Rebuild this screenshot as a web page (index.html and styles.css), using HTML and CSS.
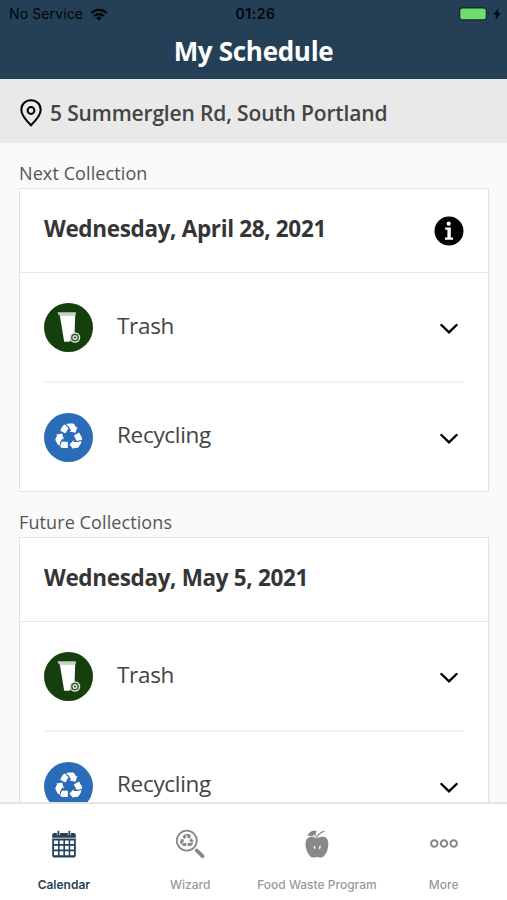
FILE: index.html
```html
<!DOCTYPE html>
<html lang="en">
<head>
<meta charset="utf-8">
<title>My Schedule</title>
<link rel="stylesheet" href="styles.css">
</head>
<body>
<svg class="defs" width="0" height="0" aria-hidden="true">
  <defs>
    <g id="arrow">
      <path d="M-1.2 5V11.3H-6.5Q-8.6 11.3-9.2 10.2L-7.6 5Z"/>
      <path d="M.5 8 4.8 3.2V5.2H9.8L12.4 3.8Q13.2 5.2 12.2 7L10 10.4Q9.4 11.3 8 11.3H4.8V13Z"/>
    </g>
    <symbol id="recycle" viewBox="-14.5 -14.5 29 29">
      <use href="#arrow"/>
      <use href="#arrow" transform="rotate(120)"/>
      <use href="#arrow" transform="rotate(240)"/>
    </symbol>
    <symbol id="bin" viewBox="0 0 49 49">
      <circle cx="24.5" cy="24.5" r="24.5" fill="#153f0d"/>
      <path d="M13.5 9.3H31.8V12.2H14.8Z" fill="#c4d2c0"/>
      <path d="M15.8 12.2H31.2L30.5 31 25.6 38.8H20.2Z" fill="#fff"/>
      <circle cx="31" cy="34.5" r="5.3" fill="#d5dfd2"/>
      <circle cx="31" cy="34.5" r="3.2" fill="none" stroke="#2d5228" stroke-width="1.3"/>
      <circle cx="31" cy="34.5" r="1" fill="#2d5228"/>
    </symbol>
    <symbol id="chevron" viewBox="0 0 18 12">
      <path d="M1.4 2 9 9.4 16.6 2" fill="none" stroke="#000" stroke-width="2.4" stroke-linecap="round" stroke-linejoin="miter"/>
    </symbol>
  </defs>
</svg>

<div class="screen">
  <header class="header">
    <div class="status">
      <div class="status-left">
        <span class="carrier">No Service</span>
        <svg class="wifi" width="18" height="13" viewBox="0 0 18 13">
          <path d="M1.4 5A11 11 0 0 1 16.6 5M4.3 8A6.8 6.8 0 0 1 13.7 8" fill="none" stroke="#020509" stroke-width="2.3"/>
          <path d="M6.2 9.7A4.2 4.2 0 0 1 11.8 9.7L9 12.6Z" fill="#020509"/>
        </svg>
      </div>
      <span class="clock">01:26</span>
      <div class="status-right">
        <svg width="43" height="14" viewBox="0 0 43 14">
          <rect x=".7" y=".9" width="26.6" height="12" rx="2.5" fill="#6fdc6c" stroke="#12252f" stroke-width="1.2"/>
          <path d="M29 5V9Q31 7 29 5Z" fill="#12252f"/>
          <path d="M39.2 1.8 34.8 7.6H37.7L36.7 12.2 41.3 6.2H38.3Z" fill="#020509" stroke="#020509" stroke-width=".5"/>
        </svg>
      </div>
    </div>
    <h1 class="title">My Schedule</h1>
  </header>

  <div class="address">
    <svg class="pin" width="22" height="28" viewBox="0 0 22 28">
      <path d="M11 1.3C5.4 1.3 1.3 5.3 1.3 10.8 1.3 16.2 6.3 21.7 11 26.3 15.7 21.7 20.7 16.2 20.7 10.8 20.7 5.3 16.6 1.3 11 1.3Z" fill="none" stroke="#000" stroke-width="2"/>
      <circle cx="11" cy="11.5" r="3.4" fill="none" stroke="#000" stroke-width="2"/>
    </svg>
    <span>5 Summerglen Rd, South Portland</span>
  </div>

  <main class="content">
    <h2 class="label">Next Collection</h2>
    <section class="card">
      <div class="card-head">
        <span>Wednesday, April 28, 2021</span>
        <svg class="info" width="30" height="30" viewBox="0 0 30 30">
          <circle cx="15" cy="15" r="14.5" fill="#000"/>
          <circle cx="14.7" cy="7.7" r="2.1" fill="#fff"/>
          <path d="M11.2 11.6H16.8V21.5H19V23.8H11V21.5H13.4V13.8H11.2Z" fill="#fff"/>
        </svg>
      </div>
      <div class="rows">
        <div class="row">
          <svg class="badge"><use href="#bin"/></svg>
          <span class="name">Trash</span>
          <svg class="chevron"><use href="#chevron"/></svg>
        </div>
        <div class="row">
          <span class="badge blue"><svg><use href="#recycle"/></svg></span>
          <span class="name">Recycling</span>
          <svg class="chevron"><use href="#chevron"/></svg>
        </div>
      </div>
    </section>

    <h2 class="label">Future Collections</h2>
    <section class="card">
      <div class="card-head"><span>Wednesday, May 5, 2021</span></div>
      <div class="rows">
        <div class="row">
          <svg class="badge"><use href="#bin"/></svg>
          <span class="name">Trash</span>
          <svg class="chevron"><use href="#chevron"/></svg>
        </div>
        <div class="row">
          <span class="badge blue"><svg><use href="#recycle"/></svg></span>
          <span class="name">Recycling</span>
          <svg class="chevron"><use href="#chevron"/></svg>
        </div>
      </div>
    </section>
  </main>

  <nav class="tabs">
    <div class="tab active">
      <svg width="30" height="30" viewBox="0 0 30 30">
        <rect x="3.2" y="4" width="23.6" height="24.6" rx="2.2" fill="#234158"/>
        <path d="M2.4 9.2H27.6" stroke="#b4c4cc" stroke-width="1.2"/>
        <path d="M9.4 2V6.5M20.3 2V6.5" stroke="#fff" stroke-width="3"/>
        <path d="M9.4 1.8V7.2M20.3 1.8V7.2" stroke="#234158" stroke-width="1.8"/>
        <path d="M5 11.4H9V15H5ZM10.6 11.4H14.4V15H10.6ZM16 11.4H19.7V15H16ZM21.2 11.4H25V15H21.2ZM5 16.8H9V20.5H5ZM10.6 16.8H14.4V20.5H10.6ZM16 16.8H19.7V20.5H16ZM21.2 16.8H25V20.5H21.2ZM5 22.2H9V26.3H5ZM10.6 22.2H14.4V26.3H10.6ZM16 22.2H19.7V26.3H16ZM21.2 22.2H25V26.3H21.2Z" fill="#fff"/>
      </svg>
      <span>Calendar</span>
    </div>
    <div class="tab">
      <svg width="30" height="30" viewBox="0 0 30 30">
        <circle cx="11.8" cy="11.6" r="10" fill="none" stroke="#888" stroke-width="1.8"/>
        <use href="#recycle" x="4.8" y="4.6" width="14" height="14" fill="#888"/>
        <path d="M21.8 21.5 27.5 27.2" stroke="#888" stroke-width="3.8" stroke-linecap="round"/>
      </svg>
      <span>Wizard</span>
    </div>
    <div class="tab">
      <svg width="30" height="30" viewBox="0 0 30 30">
        <path d="M14.5 9.3C11 7 7.5 7.2 5.5 9.2 2.8 11.8 3.3 17.5 4.7 21.3 6 25.2 8.3 28.6 11.2 28.6 13 28.6 13.8 28 15 28 16.2 28 17 28.6 18.8 28.6 21.7 28.6 24 25.2 25.3 21.3 26.7 17.5 27 11.8 24.5 9.2 22.5 7.2 18.5 7.3 15.5 9.2Z" fill="#888"/>
        <path d="M5.5 6.6C6.8 3 10.5 1 14.6 2 14.5 5.6 10.3 8.2 5.5 6.6Z" fill="#888"/>
        <path d="M14.7 9C15.3 5.5 18.2 3.8 22.4 2.2" fill="none" stroke="#888" stroke-width="1.3"/>
        <path d="M14 5 12.8 7.9" stroke="#888"/>
        <path d="M11.7 16.6Q13.8 17.2 13.2 20.5 11 19.3 11.7 16.6ZM18.6 16.6Q16.4 17.2 17 20.5 19.3 19.3 18.6 16.6Z" fill="#fff"/>
      </svg>
      <span>Food Waste Program</span>
    </div>
    <div class="tab">
      <svg width="30" height="30" viewBox="0 0 30 30">
        <g fill="none" stroke="#888" stroke-width="2">
          <circle cx="5.3" cy="14.5" r="3.2"/><circle cx="15" cy="14.5" r="3.2"/><circle cx="24.7" cy="14.5" r="3.2"/>
        </g>
      </svg>
      <span>More</span>
    </div>
  </nav>
</div>
</body>
</html>
```
FILE: styles.css
```css
* { box-sizing: border-box; }
body {
  margin: 0;
  background: #fafafa;
  font-family: "Open Sans", sans-serif;
  color: #353535;
}
.defs { position: absolute; }
.screen {
  display: flex;
  flex-direction: column;
  height: 900px;
  overflow: hidden;
}
svg { display: block; flex: none; }

.header { flex: none; height: 79px; background: #254056; }
.status {
  display: grid;
  grid-template-columns: 1fr auto 1fr;
  align-items: center;
  height: 28px;
  padding: 0 5px 0 9px;
  font: 14px/28px Inter, sans-serif;
  color: #020509;
}
.status-left { display: flex; align-items: center; gap: 7px; }
.carrier { letter-spacing: .12px; }
.clock { font-weight: 600; letter-spacing: .5px; }
.status-right { display: flex; justify-content: flex-end; }
.title {
  margin: 0;
  text-align: center;
  font-size: 26px;
  line-height: 46px;
  font-weight: 700;
  letter-spacing: -.3px;
  color: #fff;
}

.address {
  flex: none;
  display: flex;
  align-items: center;
  gap: 8px;
  height: 64px;
  padding: 3px 20px 0;
  background: #e9e9e9;
  font-size: 21px;
  font-weight: 600;
  letter-spacing: -.15px;
  color: #444;
}

.content { flex: 1; min-height: 0; overflow: hidden; padding: 0 18px 0 19px; }
.label {
  margin: 0;
  height: 45px;
  padding-top: 15px;
  font-size: 18px;
  line-height: 30px;
  font-weight: 400;
  letter-spacing: .1px;
  color: #555;
}
.card {
  height: 304px;
  background: #fff;
  border: 1px solid #e2e2e2;
}
.card-head {
  display: flex;
  justify-content: space-between;
  height: 84px;
  padding: 25px 24px 0;
  border-bottom: 1px solid #e8e8e8;
  font-size: 22.5px;
  line-height: 30px;
  font-weight: 700;
  letter-spacing: -.34px;
}
.info { margin-top: 2px; }
.rows { padding: 0 24px; }
.row { display: flex; align-items: center; height: 108px; padding-top: 1px; }
.row + .row { height: 110px; padding-top: 0; border-top: 2px solid #f3f3f3; }
.badge { width: 49px; height: 49px; flex: none; }
.blue {
  display: grid;
  place-items: center;
  padding-bottom: 1px;
  border-radius: 50%;
  background: #2b6cb9;
  fill: #fff;
}
.blue svg { width: 28px; height: 28px; }
.name {
  flex: 1;
  margin: -4px 0 0 24px;
  font-size: 22.5px;
  line-height: 30px;
  letter-spacing: -.3px;
  color: #444;
}
.chevron { width: 18px; height: 12px; margin: 2px 6px 0 0; }
.row + .row .chevron { margin-top: 4px; }

.tabs {
  flex: none;
  display: grid;
  grid-template-columns: repeat(4, 1fr);
  height: 98px;
  border-top: 2px solid #e4e4e4;
  background: #fff;
}
.tab {
  display: flex;
  flex-direction: column;
  align-items: center;
  gap: 15px;
  padding-top: 25px;
  font: 500 12px/22px Inter, sans-serif;
  color: #999;
  white-space: nowrap;
}
.active { padding-left: 1px; font-weight: 600; color: #294158; }
```
